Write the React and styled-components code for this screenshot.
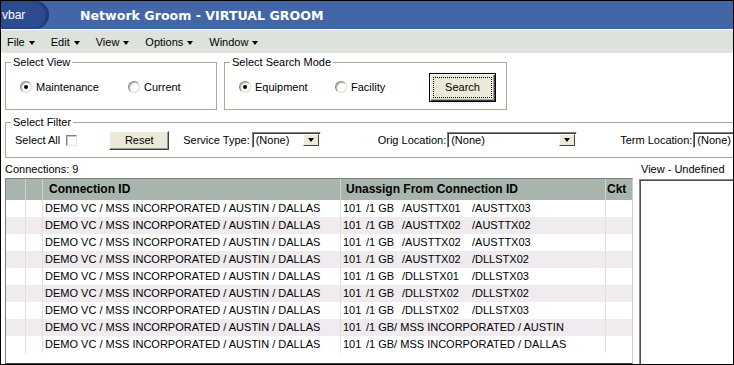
import React from 'react';
import styled, { createGlobalStyle } from 'styled-components';

const Global = createGlobalStyle`
  html, body { margin: 0; padding: 0; background: #fff; }
  body { font-family: "Liberation Sans", Arial, sans-serif; font-size: 11px; color: #000; }
  * { box-sizing: border-box; }
`;

const Window = styled.div`
  width: 734px;
  height: 365px;
  border: 1px solid #000;
  overflow: hidden;
  display: flex;
  flex-direction: column;
  background: #fff;
`;

const TitleBar = styled.div`
  height: 29px;
  flex-shrink: 0;
  background: #4366a6;
  border-bottom: 1px solid #fff;
  display: flex;
  align-items: stretch;
`;

const AppTab = styled.div`
  width: 48px;
  background: #2c4c8f;
  border-radius: 0 15px 15px 0;
  box-shadow: inset -3px 0 3px rgba(0, 0, 0, 0.28);
  color: #fff;
  font-size: 12px;
  display: flex;
  align-items: center;
  padding-left: 1px;
`;

const Title = styled.div`
  margin-left: 31px;
  display: flex;
  align-items: center;
  color: #fff;
  font-family: "DejaVu Sans", Verdana, sans-serif;
  font-weight: bold;
  font-size: 12.6px;
`;

const MenuBar = styled.div`
  height: 23px;
  flex-shrink: 0;
  background: #dee2dc;
  display: flex;
  align-items: center;
  gap: 16px;
  padding-left: 6px;
`;

const MenuItem = styled.div`
  display: flex;
  align-items: center;
  gap: 4px;
`;

const Caret = styled.span`
  width: 0;
  height: 0;
  border-left: 3.5px solid transparent;
  border-right: 3.5px solid transparent;
  border-top: 4px solid #000;
  margin-top: 2px;
`;

const Body = styled.div`
  flex: 1;
  min-height: 0;
  display: flex;
  flex-direction: column;
  padding-left: 4px;
`;

const GroupRow = styled.div`
  display: flex;
  gap: 7px;
  margin-top: 3px;
`;

const GroupBox = styled.fieldset`
  margin: ${p => p.$mt || 0}px 0 0 0;
  padding: 0;
  min-width: 0;
  flex-shrink: 0;
  width: ${p => p.$w}px;
  border: 1px solid #a9a796;
`;

const Legend = styled.legend`
  margin-left: 5px;
  padding: 0 2px;
  line-height: 13px;
  font-size: 11px;
`;

const BoxRow = styled.div`
  height: ${p => p.$h}px;
  padding: 0 0 ${p => p.$pb}px ${p => p.$pl}px;
  display: flex;
  align-items: center;
`;

const RadioItem = styled.label`
  width: ${p => p.$w}px;
  flex-shrink: 0;
  display: flex;
  align-items: center;
  gap: 4px;
`;

const Radio = styled.span`
  width: 12px;
  height: 12px;
  border-radius: 50%;
  background: radial-gradient(circle at 65% 65%, #fff 40%, #e6e4dc 100%);
  border: 1px solid;
  border-color: #8a8a8a #d8d8d8 #d8d8d8 #8a8a8a;
  box-shadow: inset 1px 1px 0 #b5b5b5;
  display: flex;
  align-items: center;
  justify-content: center;
  &::after {
    content: "";
    width: 4px;
    height: 4px;
    border-radius: 50%;
    background: ${p => (p.$on ? '#000' : 'transparent')};
  }
`;

const DefaultButton = styled.button`
  width: 67px;
  height: 29px;
  font: inherit;
  color: #000;
  background: #ece9d8;
  border: 1px solid #000;
  box-shadow: inset 1px 1px 0 #fff, inset -1px -1px 0 #404040, inset -2px -2px 0 #a0a0a0;
  outline: 1px dotted #000;
  outline-offset: -5px;
  padding: 0;
`;

const PlainButton = styled.button`
  width: 60px;
  height: 19px;
  margin-left: ${p => p.$ml}px;
  font: inherit;
  color: #000;
  background: #ece9d8;
  border: 1px solid;
  border-color: #fff #404040 #404040 #fff;
  box-shadow: inset -1px -1px 0 #9a9a9a;
  padding: 0;
`;

const Text = styled.span`
  margin-left: ${p => p.$ml || 0}px;
  white-space: nowrap;
`;

const Check = styled.span`
  width: 11px;
  height: 11px;
  margin-left: ${p => p.$ml}px;
  background: #fff;
  border: 1px solid;
  border-color: #808080 #e8e8e8 #e8e8e8 #808080;
  box-shadow: inset 1px 1px 0 #c8c8c8;
`;

const Select = styled.div`
  width: ${p => p.$w}px;
  height: 16px;
  margin-left: ${p => p.$ml}px;
  flex-shrink: 0;
  background: #fff;
  border: 1px solid;
  border-color: #808080 #fff #fff #808080;
  box-shadow: inset 1px 1px 0 #404040;
  display: flex;
  align-items: stretch;
  justify-content: space-between;
  padding: 1px 1px 1px 3px;
  line-height: 13px;
  white-space: nowrap;
  overflow: hidden;
`;

const DropButton = styled.span`
  width: 16px;
  flex-shrink: 0;
  background: #ece9d8;
  border: 1px solid;
  border-color: #fff #404040 #404040 #fff;
  display: flex;
  align-items: center;
  justify-content: center;
  &::after {
    content: "";
    border-left: 3.5px solid transparent;
    border-right: 3.5px solid transparent;
    border-top: 4px solid #000;
  }
`;

const Main = styled.div`
  flex: 1;
  min-height: 0;
  margin-top: 5px;
  display: flex;
  gap: 6px;
`;

const LeftCol = styled.div`
  width: 628px;
  flex-shrink: 0;
  display: flex;
  flex-direction: column;
`;

const RightCol = styled.div`
  flex: 1;
  display: flex;
  flex-direction: column;
`;

const Caption = styled.div`
  height: 13px;
  line-height: 13px;
  margin-bottom: ${p => p.$mb}px;
  padding-left: ${p => p.$pl || 0}px;
  white-space: nowrap;
`;

const Table = styled.div`
  flex: 1;
  border: 1px solid;
  border-color: #7f7f7f #d4d0c8 #404040 #7f7f7f;
  background: #fff;
  display: flex;
  flex-direction: column;
  overflow: hidden;
`;

const Row = styled.div`
  display: grid;
  grid-template-columns: 20px 17px 298px 265px 26px;
  height: ${p => (p.$header ? 21 : 17)}px;
  flex-shrink: 0;
  background: ${p => (p.$header ? '#a7b5ad' : p.$alt ? '#efebef' : '#fff')};
`;

const HeadCell = styled.div`
  border-right: 1px solid #cfd6d2;
  padding-left: ${p => p.$pl || 0}px;
  font-weight: bold;
  font-size: 12px;
  line-height: 21px;
  white-space: nowrap;
  overflow: hidden;
  &:last-child { border-right: none; }
`;

const Cell = styled.div`
  border-right: 1px solid #e2e0da;
  padding-left: 2px;
  line-height: 17px;
  white-space: nowrap;
  overflow: hidden;
  &:last-child { border-right: none; }
`;

const Seg = styled.span`
  display: inline-block;
  width: ${p => (p.$w ? `${p.$w}px` : 'auto')};
`;

const Panel = styled.div`
  flex: 1;
  margin-top: 1px;
  background: #fff;
  border-left: 1px solid #8a8a8a;
  border-top: 1px solid #8a8a8a;
  box-shadow: inset 1px 1px 0 #505050;
`;

const rows = [
  ['/AUSTTX01', '/AUSTTX03'],
  ['/AUSTTX02', '/AUSTTX02'],
  ['/AUSTTX02', '/AUSTTX03'],
  ['/AUSTTX02', '/DLLSTX02'],
  ['/DLLSTX01', '/DLLSTX03'],
  ['/DLLSTX02', '/DLLSTX02'],
  ['/DLLSTX02', '/DLLSTX03'],
  ['/1 GB/ MSS INCORPORATED / AUSTIN'],
  ['/1 GB/ MSS INCORPORATED / DALLAS'],
];

const menus = ['File', 'Edit', 'View', 'Options', 'Window'];

export default function App() {
  return (
    <>
      <Global />
      <Window>
        <TitleBar>
          <AppTab>vbar</AppTab>
          <Title>Network Groom - VIRTUAL GROOM</Title>
        </TitleBar>
        <MenuBar>
          {menus.map(m => (
            <MenuItem key={m}>
              {m}
              <Caret />
            </MenuItem>
          ))}
        </MenuBar>
        <Body>
          <GroupRow>
            <GroupBox $w={212}>
              <Legend>Select View</Legend>
              <BoxRow $h={40} $pb={4} $pl={14}>
                <RadioItem $w={108}><Radio $on />Maintenance</RadioItem>
                <RadioItem $w={80}><Radio />Current</RadioItem>
              </BoxRow>
            </GroupBox>
            <GroupBox $w={283}>
              <Legend>Select Search Mode</Legend>
              <BoxRow $h={40} $pb={4} $pl={14}>
                <RadioItem $w={96}><Radio $on />Equipment</RadioItem>
                <RadioItem $w={94}><Radio />Facility</RadioItem>
                <DefaultButton>Search</DefaultButton>
              </BoxRow>
            </GroupBox>
          </GroupRow>
          <GroupBox $w={780} $mt={6}>
            <Legend>Select Filter</Legend>
            <BoxRow $h={28} $pb={6} $pl={9}>
              <Text>Select All</Text>
              <Check $ml={6} />
              <PlainButton $ml={32}>Reset</PlainButton>
              <Text $ml={14}>Service Type:</Text>
              <Select $w={69} $ml={2}>(None)<DropButton /></Select>
              <Text $ml={57}>Orig Location:</Text>
              <Select $w={130} $ml={1}>(None)<DropButton /></Select>
              <Text $ml={43}>Term Location:</Text>
              <Select $w={90} $ml={1}>(None)<DropButton /></Select>
            </BoxRow>
          </GroupBox>
          <Main>
            <LeftCol>
              <Caption $mb={2}>Connections: 9</Caption>
              <Table>
                <Row $header>
                  <HeadCell />
                  <HeadCell />
                  <HeadCell $pl={6}>Connection ID</HeadCell>
                  <HeadCell $pl={5}>Unassign From Connection ID</HeadCell>
                  <HeadCell $pl={1}>Ckt</HeadCell>
                </Row>
                {rows.map((r, i) => (
                  <Row key={i} $alt={i % 2 === 1}>
                    <Cell />
                    <Cell />
                    <Cell>DEMO VC / MSS INCORPORATED / AUSTIN / DALLAS</Cell>
                    <Cell>
                      <Seg $w={23}>101</Seg>
                      {r.length === 2 ? (
                        <>
                          <Seg $w={36}>/1 GB</Seg>
                          <Seg $w={70}>{r[0]}</Seg>
                          <Seg>{r[1]}</Seg>
                        </>
                      ) : (
                        <Seg>{r[0]}</Seg>
                      )}
                    </Cell>
                    <Cell />
                  </Row>
                ))}
              </Table>
            </LeftCol>
            <RightCol>
              <Caption $mb={2} $pl={2}>View - Undefined</Caption>
              <Panel />
            </RightCol>
          </Main>
        </Body>
      </Window>
    </>
  );
}
